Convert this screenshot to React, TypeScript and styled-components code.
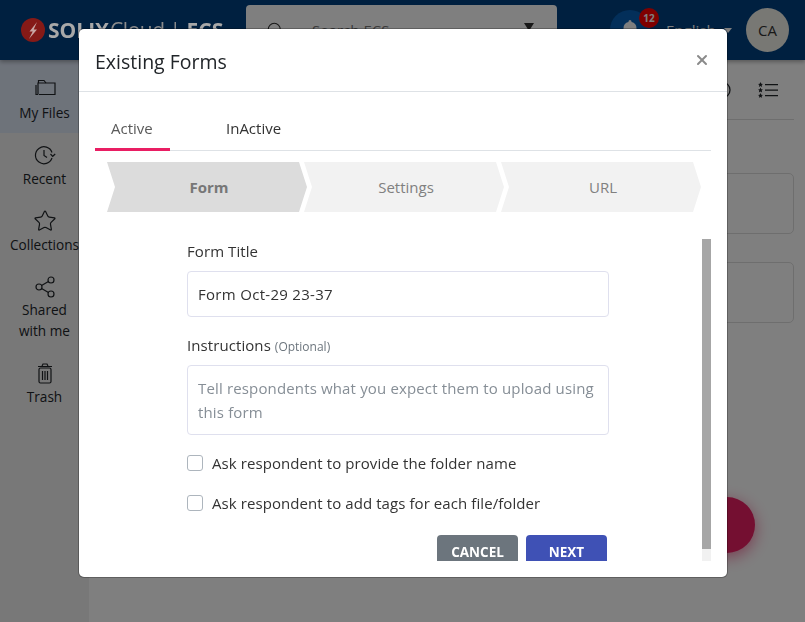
import React from "react";
import styled, { createGlobalStyle } from "styled-components";
import { Star, Share2, X, Search } from "lucide-react";

const Global = createGlobalStyle`
  html, body { margin: 0; height: 100%; overflow: hidden; }
  body { font-family: "Open Sans", "Noto Sans", sans-serif; color: #212529; background: #fff; }
  #root { height: 100%; }
  * { box-sizing: border-box; }
`;

const Page = styled.div`
  height: 100%;
  display: flex;
  flex-direction: column;
  position: relative;
`;
const TopBar = styled.header`
  height: 60px;
  flex: none;
  background: #004080;
  box-shadow: 0 2px 4px rgba(0, 0, 0, 0.3);
  display: flex;
  align-items: center;
  padding: 0 16px 0 21px;
  position: relative;
`;
const Logo = styled.div`
  width: 225px;
  display: flex;
  align-items: center;
  gap: 3px;
  color: #a8a8a8;
  font-size: 21px;
  white-space: nowrap;
  position: relative;
  z-index: 6;
`;
const LogoStrong = styled.b`
  font-weight: 700;
`;
const LogoEnd = styled.b`
  font-weight: 700;
  margin-left: 3px;
`;
const LogoThin = styled.span`
  font-weight: 400;
  letter-spacing: -0.5px;
  color: #8c8c8c;
  margin-left: -2px;
`;
const SearchBox = styled.div`
  width: 311px;
  height: 50px;
  background: #fff;
  border-radius: 4px;
  display: flex;
  align-items: center;
  padding: 0 20px;
  color: #777;
  font-size: 15px;
  gap: 28px;
`;
const SearchText = styled.span`
  flex: 1;
`;
const Caret = styled.span`
  width: 0;
  height: 0;
  border-left: 5.5px solid transparent;
  border-right: 5.5px solid transparent;
  border-top: 8px solid #333;
  margin: -6px 3px 0 0;
`;
const BellWrap = styled.div`
  width: 40px;
  height: 40px;
  border-radius: 50%;
  margin-left: 53px;
  background: #065fb5;
  display: flex;
  align-items: center;
  justify-content: center;
  position: relative;
`;
const Badge = styled.span`
  position: absolute;
  top: -2px;
  right: -9px;
  width: 20px;
  height: 20px;
  border-radius: 50%;
  background: #ff0000;
  color: #fff;
  font-size: 10px;
  font-weight: 700;
  display: flex;
  align-items: center;
  justify-content: center;
`;
const Lang = styled.span`
  margin-left: 16px;
  color: #fff;
  font-size: 15px;
  width: 80px;
  display: flex;
  align-items: center;
  gap: 8px;
`;
const LangCaret = styled.span`
  width: 0;
  height: 0;
  border-left: 4px solid transparent;
  border-right: 4px solid transparent;
  border-top: 5px solid #fff;
`;
const Avatar = styled.div`
  width: 43px;
  height: 44px;
  border-radius: 50%;
  background: #f0f0e8;
  color: #333;
  font-size: 15px;
  display: flex;
  align-items: center;
  justify-content: center;
`;
const Body = styled.div`
  flex: 1;
  display: flex;
  min-height: 0;
`;
const Sidebar = styled.nav`
  width: 89px;
  flex: none;
  background: #f0f0f0;
`;
const NavItem = styled.div<{ $active?: boolean }>`
  display: flex;
  flex-direction: column;
  align-items: center;
  padding: ${(p) => (p.$active ? "15px 0 10px" : "10px 0 10px")};
  background: ${(p) => (p.$active ? "#dde6f5" : "transparent")};
  color: #212529;
  font-size: 13.6px;
  line-height: 21px;
  text-align: center;
`;
const NavLabel = styled.span<{ $gap: number }>`
  margin-top: ${(p) => p.$gap}px;
`;
const Main = styled.main`
  flex: 1;
  padding-right: 11px;
  position: relative;
`;
const Toolbar = styled.div`
  height: 60px;
  border-bottom: 1px solid #ddd;
  display: flex;
  align-items: center;
  justify-content: flex-end;
  padding-right: 16px;
  gap: 26px;
`;
const Cards = styled.div`
  padding-top: 53px;
  display: flex;
  flex-direction: column;
  gap: 28px;
`;
const Card = styled.div`
  height: 61px;
  border: 1px solid #ddd;
  border-radius: 5px;
`;
const Fab = styled.div`
  position: absolute;
  right: 50px;
  bottom: 69px;
  width: 56px;
  height: 56px;
  border-radius: 50%;
  background: #e91e63;
  box-shadow: 0 4px 16px rgba(233, 30, 99, 0.6);
`;
const Overlay = styled.div`
  position: fixed;
  inset: 0;
  background: rgba(0, 0, 0, 0.5);
  z-index: 5;
`;
const Modal = styled.div`
  position: fixed;
  left: 79px;
  top: 29px;
  width: 648px;
  height: 548px;
  z-index: 7;
  background: #fff;
  border-radius: 5px;
  box-shadow: 0 0 0 1px rgba(0, 0, 0, 0.25);
  display: flex;
  flex-direction: column;
`;
const ModalHead = styled.div`
  height: 63px;
  flex: none;
  border-bottom: 1px solid #dee2e6;
  display: flex;
  align-items: center;
  justify-content: space-between;
  padding: 2px 17px 0 16px;
`;
const ModalTitle = styled.h5`
  margin: 0;
  font-size: 19.5px;
  font-weight: 500;
  color: #212529;
`;
const Close = styled.button`
  border: 0;
  background: none;
  padding: 0;
  margin-top: -2px;
  display: flex;
  color: #8a8a8a;
`;
const ModalBody = styled.div`
  flex: 1;
  min-height: 0;
  padding: 16px;
  display: flex;
  flex-direction: column;
`;
const Tabs = styled.div`
  height: 43px;
  flex: none;
  border-bottom: 1px solid #dee2e6;
  display: flex;
`;
const Tab = styled.div<{ $active?: boolean }>`
  height: 43px;
  padding: 0 16px;
  min-width: 75px;
  margin-right: ${(p) => (p.$active ? "40px" : "0")};
  line-height: 41px;
  font-size: 15px;
  color: ${(p) => (p.$active ? "#5a5a5a" : "#333")};
  border-bottom: ${(p) => (p.$active ? "3px solid #e91e63" : "0")};
`;
const Steps = styled.div`
  margin: 11px 10px 27px 12px;
  display: flex;
  flex: none;
`;
const Step = styled.div<{ $active?: boolean }>`
  width: 200px;
  height: 50px;
  margin-right: -3px;
  padding-left: 4px;
  display: flex;
  align-items: center;
  justify-content: center;
  font-size: 15px;
  font-weight: ${(p) => (p.$active ? 700 : 400)};
  color: ${(p) => (p.$active ? "#777" : "#808080")};
  background: ${(p) => (p.$active ? "#dcdcdc" : "#f2f2f2")};
  clip-path: polygon(0 0, 192px 0, 200px 25px, 192px 100%, 0 100%, 8px 25px);
`;
const Pane = styled.div`
  flex: 1;
  min-height: 0;
  display: flex;
`;
const FormArea = styled.div`
  flex: 1;
  min-width: 0;
  overflow: hidden;
`;
const Rail = styled.div`
  width: 9px;
  flex: none;
  display: flex;
  flex-direction: column;
  background: #f1f1f1;
`;
const Thumb = styled.div`
  height: 310px;
  background: #a6a6a6;
`;
const Form = styled.form`
  width: 422px;
  margin-left: 92px;
  font-size: 15px;
  letter-spacing: 0.08px;
`;
const Label = styled.label`
  display: block;
  height: 24px;
  line-height: 24px;
  margin-bottom: 8px;
  color: #333;
`;
const Hint = styled.small`
  font-size: 12px;
  color: #6c757d;
  letter-spacing: 0;
`;
const Input = styled.input`
  display: block;
  width: 100%;
  height: 46px;
  padding: 0 10px;
  border: 1px solid #dfe0ee;
  border-radius: 4px;
  font: inherit;
  letter-spacing: 0.3px;
  color: #333;
  margin-bottom: 16px;
`;
const Area = styled.textarea`
  display: block;
  width: 100%;
  height: 70px;
  padding: 10px 10px;
  border: 1px solid #dfe0ee;
  border-radius: 4px;
  font: inherit;
  letter-spacing: 0.15px;
  line-height: 24px;
  resize: none;
  margin-bottom: 16px;
  overflow: hidden;
  &::placeholder { color: #868e96; }
`;
const CheckRow = styled.label`
  display: flex;
  align-items: center;
  gap: 9px;
  line-height: 24px;
  margin-bottom: 16px;
  color: #333;
`;
const Box = styled.span`
  width: 16px;
  height: 16px;
  border: 1px solid #adb5bd;
  border-radius: 3px;
  background: #fff;
`;
const Actions = styled.div`
  display: flex;
  justify-content: flex-end;
  gap: 8px;
  margin-top: 20px;
  padding: 0 2px 5px 0;
`;
const Btn = styled.button<{ $primary?: boolean }>`
  width: 81px;
  height: 34px;
  border: 0;
  border-radius: 4px;
  background: ${(p) => (p.$primary ? "#3f51b5" : "#6c757d")};
  color: #fff;
  font: 700 13.5px "Open Sans", sans-serif;
`;

const FolderIcon = () => (
  <svg width="24" height="24" viewBox="0 0 24 24" fill="none" stroke="#212529" strokeWidth="1.2">
    <path d="M5 19.500V8h17v11.500H6" />
    <path d="M5.500 8V5.500H11l2 2.500" />
    <path d="M3 10v9.500h2" />
  </svg>
);
const RecentIcon = () => (
  <svg width="24" height="24" viewBox="0 0 24 24" fill="none" stroke="#212529" strokeWidth="1.200">
    <path d="M19 9.500A8.500 8.500 0 1 0 19 15" />
    <path d="M17.500 11l2.200 2.300 2.500-2.300" />
    <path d="M11 7v5.500l3 2" />
  </svg>
);
const TrashIcon = () => (
  <svg width="24" height="24" viewBox="0 0 24 24" fill="none" stroke="#212529" strokeWidth="1.2">
    <path d="M5 5.500h14M9 5l1-2h4l1 2" />
    <rect x="6" y="7" width="12" height="15" rx="1.5" />
    <path d="M9.500 10v9M12 10v9M14.500 10v9" />
  </svg>
);
const StarList = () => (
  <svg width="20" height="16" viewBox="0 0 20 16" fill="#212529" stroke="none">
    <path d="M2.500 0l.8 1.700 1.700.2-1.300 1.200.4 1.800-1.600-.9-1.600.9.4-1.800L0 1.900l1.700-.2zM2.500 5.500l.8 1.700 1.700.2-1.300 1.200.4 1.800-1.600-.9-1.600.9.4-1.800L0 7.400l1.700-.2zM2.500 11l.8 1.700 1.700.2-1.300 1.200.4 1.700-1.600-.8-1.600.8.4-1.700L0 12.900l1.700-.2z" />
    <path d="M7 2h13v1.300H7zM7 7.500h13v1.300H7zM7 13h13v1.300H7z" />
  </svg>
);
const RoundIcon = () => (
  <svg width="20" height="20" viewBox="0 0 20 20" fill="none" stroke="#212529" strokeWidth="1.3">
    <circle cx="10" cy="10" r="8" />
  </svg>
);
const BellIcon = () => (
  <svg width="20" height="22" viewBox="0 0 20 22" fill="#fff">
    <path d="M10 1a1.500 1.500 0 0 1 1.500 1.500v.6A6.500 6.500 0 0 1 16.500 9.500V15l2 2.500H1.500l2-2.500V9.500A6.500 6.500 0 0 1 8.500 3.100v-.6A1.500 1.500 0 0 1 10 1zM7.500 19h5a2.500 2.500 0 0 1-5 0z" />
  </svg>
);

export default function App() {
  return (
    <Page>
      <Global />
      <TopBar>
        <Logo>
          <svg width="24" height="24" viewBox="0 0 24 24">
            <circle cx="12" cy="12" r="12" fill="#851a17" />
            <path d="M16 4L8.500 13.500h3.200L8 21l8-9.500h-3.300z" fill="#c9a6a4" />
          </svg>
          <LogoStrong>SOLIX</LogoStrong>
          <LogoThin>Cloud |</LogoThin>
          <LogoEnd>ECS</LogoEnd>
        </Logo>
        <SearchBox>
          <Search size={18} color="#333" strokeWidth={1.4} />
          <SearchText>Search ECS</SearchText>
          <Caret />
        </SearchBox>
        <BellWrap>
          <BellIcon />
          <Badge>12</Badge>
        </BellWrap>
        <Lang>English<LangCaret /></Lang>
        <Avatar>CA</Avatar>
      </TopBar>
      <Body>
        <Sidebar>
          <NavItem $active>
            <FolderIcon />
            <NavLabel $gap={3}>My Files</NavLabel>
          </NavItem>
          <NavItem>
            <RecentIcon />
            <NavLabel $gap={1}>Recent</NavLabel>
          </NavItem>
          <NavItem>
            <Star size={24} strokeWidth={1.2} />
            <NavLabel $gap={1}>Collections</NavLabel>
          </NavItem>
          <NavItem>
            <Share2 size={24} strokeWidth={1.2} />
            <NavLabel $gap={0}>Shared<br />with me</NavLabel>
          </NavItem>
          <NavItem>
            <TrashIcon />
            <NavLabel $gap={1}>Trash</NavLabel>
          </NavItem>
        </Sidebar>
        <Main>
          <Toolbar>
            <RoundIcon />
            <StarList />
          </Toolbar>
          <Cards>
            <Card />
            <Card />
          </Cards>
          <Fab />
        </Main>
      </Body>
      <Overlay />
      <Modal>
        <ModalHead>
          <ModalTitle>Existing Forms</ModalTitle>
          <Close aria-label="Close"><X size={16} strokeWidth={3} /></Close>
        </ModalHead>
        <ModalBody>
          <Tabs>
            <Tab $active>Active</Tab>
            <Tab>InActive</Tab>
          </Tabs>
          <Steps>
            <Step $active>Form</Step>
            <Step>Settings</Step>
            <Step>URL</Step>
          </Steps>
          <Pane>
            <FormArea>
              <Form>
                <Label>Form Title</Label>
                <Input defaultValue="Form Oct-29 23-37" />
                <Label>Instructions <Hint>(Optional)</Hint></Label>
                <Area placeholder="Tell respondents what you expect them to upload using this form" />
                <CheckRow><Box />Ask respondent to provide the folder name</CheckRow>
                <CheckRow><Box />Ask respondent to add tags for each file/folder</CheckRow>
                <Actions>
                  <Btn type="button">CANCEL</Btn>
                  <Btn type="button" $primary>NEXT</Btn>
                </Actions>
              </Form>
            </FormArea>
            <Rail><Thumb /></Rail>
          </Pane>
        </ModalBody>
      </Modal>
    </Page>
  );
}
